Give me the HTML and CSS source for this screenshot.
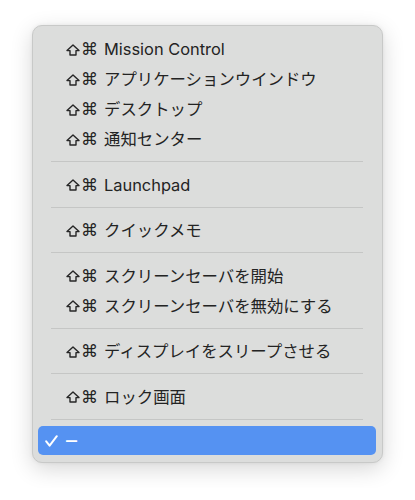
FILE: index.html
```html
<!DOCTYPE html>
<html lang="ja">
<head>
    <meta charset="UTF-8">
    <meta name="viewport" content="width=device-width, initial-scale=1.0">
    <title>ホットコーナー</title>
    <link rel="stylesheet" href="styles.css">
</head>
<body>

<!-- ホットコーナーのメニュー -->
<div class="menu">
    <div class="menu-item"><span class="keys"><svg class="shift" width="14" height="12" viewBox="0 0 14 12"><path d="M7 1 L13 6.6 L10 6.6 L10 11 L4 11 L4 6.6 L1 6.6 Z" fill="none" stroke="#262626" stroke-width="1.4" stroke-linejoin="round"/></svg><span class="cmd">⌘</span></span>Mission Control</div>
    <div class="menu-item"><span class="keys"><svg class="shift" width="14" height="12" viewBox="0 0 14 12"><path d="M7 1 L13 6.6 L10 6.6 L10 11 L4 11 L4 6.6 L1 6.6 Z" fill="none" stroke="#262626" stroke-width="1.4" stroke-linejoin="round"/></svg><span class="cmd">⌘</span></span>アプリケーションウインドウ</div>
    <div class="menu-item"><span class="keys"><svg class="shift" width="14" height="12" viewBox="0 0 14 12"><path d="M7 1 L13 6.6 L10 6.6 L10 11 L4 11 L4 6.6 L1 6.6 Z" fill="none" stroke="#262626" stroke-width="1.4" stroke-linejoin="round"/></svg><span class="cmd">⌘</span></span>デスクトップ</div>
    <div class="menu-item"><span class="keys"><svg class="shift" width="14" height="12" viewBox="0 0 14 12"><path d="M7 1 L13 6.6 L10 6.6 L10 11 L4 11 L4 6.6 L1 6.6 Z" fill="none" stroke="#262626" stroke-width="1.4" stroke-linejoin="round"/></svg><span class="cmd">⌘</span></span>通知センター</div>
    <div class="separator"></div>
    <div class="menu-item"><span class="keys"><svg class="shift" width="14" height="12" viewBox="0 0 14 12"><path d="M7 1 L13 6.6 L10 6.6 L10 11 L4 11 L4 6.6 L1 6.6 Z" fill="none" stroke="#262626" stroke-width="1.4" stroke-linejoin="round"/></svg><span class="cmd">⌘</span></span>Launchpad</div>
    <div class="separator"></div>
    <div class="menu-item"><span class="keys"><svg class="shift" width="14" height="12" viewBox="0 0 14 12"><path d="M7 1 L13 6.6 L10 6.6 L10 11 L4 11 L4 6.6 L1 6.6 Z" fill="none" stroke="#262626" stroke-width="1.4" stroke-linejoin="round"/></svg><span class="cmd">⌘</span></span>クイックメモ</div>
    <div class="separator"></div>
    <div class="menu-item"><span class="keys"><svg class="shift" width="14" height="12" viewBox="0 0 14 12"><path d="M7 1 L13 6.6 L10 6.6 L10 11 L4 11 L4 6.6 L1 6.6 Z" fill="none" stroke="#262626" stroke-width="1.4" stroke-linejoin="round"/></svg><span class="cmd">⌘</span></span>スクリーンセーバを開始</div>
    <div class="menu-item"><span class="keys"><svg class="shift" width="14" height="12" viewBox="0 0 14 12"><path d="M7 1 L13 6.6 L10 6.6 L10 11 L4 11 L4 6.6 L1 6.6 Z" fill="none" stroke="#262626" stroke-width="1.4" stroke-linejoin="round"/></svg><span class="cmd">⌘</span></span>スクリーンセーバを無効にする</div>
    <div class="separator"></div>
    <div class="menu-item"><span class="keys"><svg class="shift" width="14" height="12" viewBox="0 0 14 12"><path d="M7 1 L13 6.6 L10 6.6 L10 11 L4 11 L4 6.6 L1 6.6 Z" fill="none" stroke="#262626" stroke-width="1.4" stroke-linejoin="round"/></svg><span class="cmd">⌘</span></span>ディスプレイをスリープさせる</div>
    <div class="separator"></div>
    <div class="menu-item"><span class="keys"><svg class="shift" width="14" height="12" viewBox="0 0 14 12"><path d="M7 1 L13 6.6 L10 6.6 L10 11 L4 11 L4 6.6 L1 6.6 Z" fill="none" stroke="#262626" stroke-width="1.4" stroke-linejoin="round"/></svg><span class="cmd">⌘</span></span>ロック画面</div>
    <div class="separator last"></div>
    <div class="menu-item selected">
        <svg class="check" width="13" height="12" viewBox="0 0 13 12">
            <path d="M1.2 6.4 L4.6 10.6 L11.8 1.2" fill="none" stroke="#ffffff" stroke-width="2" stroke-linecap="round" stroke-linejoin="round"/>
        </svg>
        <span class="dash">–</span>
    </div>
</div>

</body>
</html>
```

FILE: styles.css
```css
/* Genel */
body {
    margin: 0;
    padding: 25px 32px;
    background-color: #ffffff;
    font-family: Inter, "Noto Sans CJK JP", sans-serif;
    font-size: 16.4px;
    color: #232323;
}

/* Menü kutusu */
.menu {
    background-color: #dcdddc;
    border: 1px solid #c8c9c8;
    border-radius: 10px;
    padding: 8px 6px 7px 5px;
    box-shadow: 0 6px 22px rgba(0, 0, 0, 0.16), 0 0 4px rgba(0, 0, 0, 0.06);
}

/* Satırlar */
.menu-item {
    position: relative;
    height: 30px;
    line-height: 30px;
    padding-left: 28px;
    white-space: nowrap;
    border-radius: 5px;
}

/* ⇧⌘ kısayol simgeleri */
.keys {
    display: inline-flex;
    align-items: center;
    width: 38px;
    height: 30px;
    vertical-align: top;
}

.shift {
    flex-shrink: 0;
    margin-top: 1px;
}

.cmd {
    font-family: "DejaVu Sans", sans-serif;
    font-size: 17px;
    line-height: 30px;
    margin-left: 1px;
}

/* Seçili satır */
.selected {
    background-color: #5592f2;
    color: #ffffff;
    height: 29px;
    line-height: 29px;
}

.dash {
    font-size: 22px;
    line-height: 29px;
    vertical-align: -1px;
}

.check {
    position: absolute;
    left: 7px;
    top: 9px;
}

/* Ayırıcı çizgi */
.separator {
    height: 1px;
    background-color: #c5c6c5;
    margin: 7px 13px 7.5px;
}

.separator.last {
    margin-bottom: 6.5px;
}
```
